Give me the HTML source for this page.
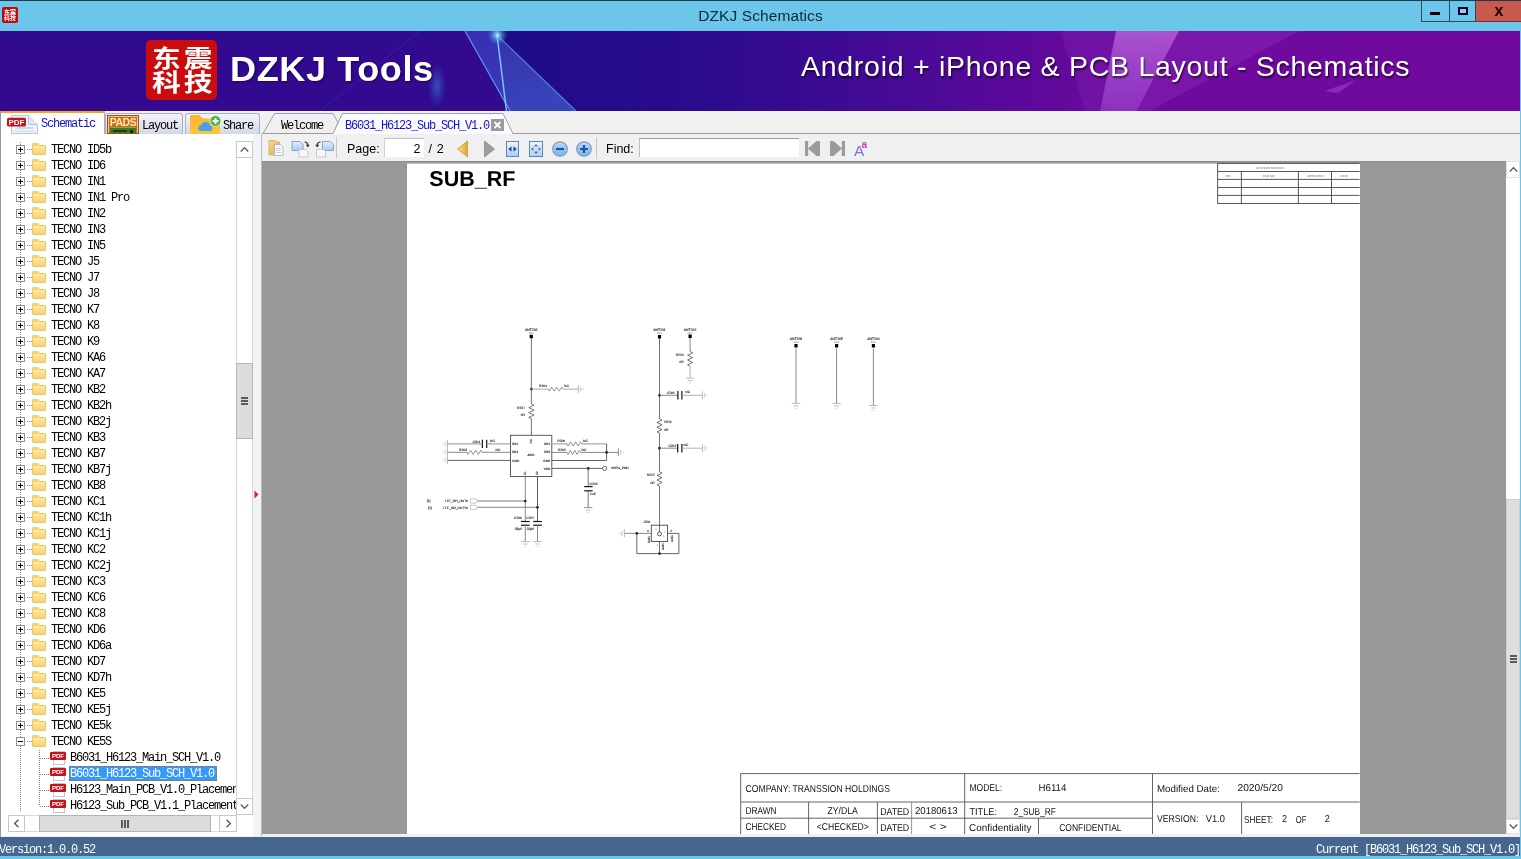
<!DOCTYPE html>
<html lang="en">
<head>
<meta charset="utf-8">
<title>DZKJ Schematics</title>
<style>
*{box-sizing:border-box;margin:0;padding:0}
html,body{width:1521px;height:859px;overflow:hidden;background:#6bc6ea;font-family:"Liberation Sans","Noto Sans CJK SC",sans-serif}
.abs{position:absolute}
#win{will-change:transform;position:absolute;left:0;top:0;width:1521px;height:859px;overflow:hidden;background:#6bc6ea}
/* title bar */
#tbar{position:absolute;left:0;top:0;width:1521px;height:31px;background:#6bc6ea;border-top:1px solid #1f3b4c}
#tbar .ttl{position:absolute;left:0;width:1521px;top:6px;text-align:center;font-size:15.5px;color:#0c2838;letter-spacing:0.1px}
#appico{position:absolute;left:2px;top:6px;width:16px;height:16px;background:#bf0a08;border-radius:2px;color:#fff;font-size:6px;line-height:6px;font-weight:bold;text-align:center;padding-top:2px;font-family:"Liberation Sans","Noto Sans CJK SC",sans-serif;overflow:hidden}
.wbtn{position:absolute;top:0px;height:21px;border:1px solid #2a4a5c;border-top:none}
/* banner */
#banner{position:absolute;left:0;top:31px;width:1520px;height:80px;overflow:hidden;background:linear-gradient(90deg,#310a8f 0px,#310a8f 560px,#2c0b8c 700px,#380a92 800px,#470a96 900px,#58099a 1000px,#68099d 1100px,#6f0a9f 1200px,#700a9f 1520px)}
#logo{position:absolute;left:146px;top:9px;width:71px;height:60px;background:#cb0c0c;border-radius:5px;color:#fff;font-weight:bold;font-family:"Liberation Sans","Noto Sans CJK SC",sans-serif;white-space:nowrap;overflow:hidden}
#logo span{position:absolute;left:6px;top:7px;font-size:24px;line-height:24px;letter-spacing:2.4px;transform:scaleX(1.2);transform-origin:left top;display:block}
#brand{position:absolute;left:230px;top:18px;font-size:35px;font-weight:bold;color:#fff;letter-spacing:.6px;transform:scaleX(1.03);transform-origin:left top;text-shadow:1px 1px 2px rgba(0,0,0,.45);white-space:nowrap}
#slogan{position:absolute;left:801px;top:19px;font-size:28.5px;color:#fff;letter-spacing:0.72px;text-shadow:1px 2px 2px rgba(0,0,0,.65);white-space:nowrap}
/* main background */
#main{position:absolute;left:0;top:111px;width:1520px;height:726px;background:#f0f0f0;border-left:1px solid #8c9baa}
.mono{font-family:"Liberation Mono","Noto Sans CJK SC",monospace;font-size:12px;letter-spacing:-1.2px;white-space:nowrap;color:#000}
/* left tabs */
.ltab{position:absolute;top:113px;height:21px;border:1px solid #a9b0c4;border-bottom:none;border-radius:3px 3px 0 0;background:linear-gradient(#f4f5fa,#d4d7e6)}
.ltab .t{position:absolute;top:3px}
/* tree */
#lpanel{position:absolute;left:1px;top:134px;width:252px;height:702px;background:#fff;overflow:hidden}
#tree{position:absolute;left:0;top:8px;width:235px;height:674px;overflow:hidden}
.row{position:relative;height:16px;white-space:nowrap}
.row .exp{position:absolute;left:15px;top:3px;width:9px;height:9px;border:1px solid #919191;background:#fff}
.row .exp i{position:absolute;left:1px;top:3px;width:5px;height:1px;background:#000}
.row .exp i.pl:after{content:"";position:absolute;left:2px;top:-2px;width:1px;height:5px;background:#000}
.row .fold{position:absolute;left:31px;top:3px;width:14px;height:10px;border-radius:1px;background:linear-gradient(#fbeaa0,#f3d36b);border:1px solid #e8c866}
.row .fold:before{content:"";position:absolute;left:-1px;top:-3px;width:7px;height:3px;background:#f1d272;border-radius:1px 1px 0 0}
.row .lbl{position:absolute;left:50px;top:1px;height:14px;line-height:14px;font-family:"Liberation Mono","Noto Sans CJK SC",monospace;font-size:12px;letter-spacing:-1.2px;color:#000}
.row.file .lbl{left:68px;padding:0 1px}
.row.file .lbl.sel{background:#3399ff;color:#fff;outline:1px dotted #c86400;outline-offset:-1px;top:0;height:15px;line-height:16px;padding-right:3px}
.row .pdf{position:absolute;left:52px;top:1px;width:12px;height:14px;background:#fff;border:1px solid #b9c6d6}
.row .pdf b{position:absolute;left:-4px;top:0px;width:16px;height:8px;background:#c4141a;color:#fff;font-size:6px;line-height:8px;font-family:"Liberation Sans",sans-serif;letter-spacing:0;text-align:center;border-radius:1px}
/* dotted guide lines */
.row .exp:after{content:"";position:absolute;left:9px;top:3px;width:6px;height:1px;background-image:linear-gradient(90deg,transparent 50%,#808080 50%);background-size:2px 1px}
.row.file:before{content:"";position:absolute;left:39px;top:8px;width:10px;height:1px;background-image:linear-gradient(90deg,#808080 50%,transparent 50%);background-size:2px 1px}
.vdot{position:absolute;width:1px;background-image:linear-gradient(#808080 50%,transparent 50%);background-size:1px 2px}
.hdot{position:absolute;height:1px;background-image:linear-gradient(90deg,#808080 50%,transparent 50%);background-size:2px 1px}
/* scrollbars */
.sb{position:absolute;background:#fff;border:1px solid #cfcfcf}
.sbtn{position:absolute;background:#fff;border:1px solid #c8c8c8}
.thumb{position:absolute;background:#dcdcdc;border:1px solid #b4b4b4}
/* toolbar */
#toolbar{position:absolute;left:262px;top:134px;width:1258px;height:27px;background:#f0f0f0}
#toolbar .tx{position:absolute;top:8px;font-size:12.5px;color:#000}
/* doc area */
#doc{position:absolute;left:262px;top:161px;width:1244px;height:673px;background:#999;overflow:hidden}
#page{position:absolute;left:145px;top:3px;width:953px;height:670px;background:#fff;box-shadow:0 -1px 0 #c4c4c4}
#doc:before{content:"";position:absolute;left:0;top:0;width:100%;height:1px;background:#8e8e8e}
/* status */
#status{position:absolute;left:0;top:837px;width:1520px;height:19px;background:#45668f}
#status .mono{color:#fff;position:absolute;top:6px}
</style>
</head>
<body>
<div id="win">
<div id="tbar">
  <div id="appico">东震<br>科技</div>
  <div class="ttl">DZKJ Schematics</div>
  <div class="wbtn" style="left:1421px;width:29px"><div class="abs" style="left:8px;top:11px;width:10px;height:3px;background:#000"></div></div>
  <div class="wbtn" style="left:1449px;width:27px"><div class="abs" style="left:8px;top:6px;width:10px;height:8px;border:2px solid #00002a;background:#8fd0ea"></div></div>
  <div class="wbtn" style="left:1475px;width:46px;background:#c8594e;border-right:none;border-bottom-color:#7a3028"><div class="abs" style="left:18.500px;top:-0.500px;font-size:16px;font-weight:bold;color:#100;line-height:20px;font-family:'Liberation Sans',sans-serif">x</div></div>
</div>
<div id="banner">
  <svg class="abs" style="left:0;top:0" width="1519" height="80" viewBox="0 0 1519 80">
    <defs>
      <linearGradient id="g1" x1="0" y1="0" x2="0.300" y2="1"><stop offset="0" stop-color="#4a8fe8" stop-opacity=".26"/><stop offset="1" stop-color="#3f7de6" stop-opacity=".5"/></linearGradient>
      <linearGradient id="g2" x1="0" y1="0" x2="0" y2="1"><stop offset="0" stop-color="#e79cff" stop-opacity=".5"/><stop offset="1" stop-color="#b860e8" stop-opacity=".45"/></linearGradient>
      <linearGradient id="g3" x1="0" y1="0" x2="1" y2="0"><stop offset="0" stop-color="#1c0c86" stop-opacity=".95"/><stop offset="1" stop-color="#1c0c86" stop-opacity="0"/></linearGradient>
      <radialGradient id="g4"><stop offset="0" stop-color="#c8ffff" stop-opacity=".95"/><stop offset=".35" stop-color="#6fd8f0" stop-opacity=".6"/><stop offset="1" stop-color="#4aa0e8" stop-opacity="0"/></radialGradient>
      <radialGradient id="g5"><stop offset="0" stop-color="#3a7fe0" stop-opacity=".55"/><stop offset="1" stop-color="#3a7fe0" stop-opacity="0"/></radialGradient>
    </defs>
    <polygon points="500,0 740,0 740,80 576,80 497,4" fill="url(#g3)"/>
    <polygon points="465,0 500,0 497,4 576,80 510,80" fill="url(#g1)"/>
    <polygon points="465,0 497,4 506,80 510,80" fill="#3a2fc0" opacity=".45"/>
    <line x1="465" y1="0" x2="510" y2="80" stroke="#6aa8f0" stroke-width="1.200" opacity=".85"/>
    <line x1="497" y1="4" x2="506.500" y2="80" stroke="#7fd4ff" stroke-width="1.500" opacity=".9"/>
    <line x1="497" y1="4" x2="576" y2="80" stroke="#5a8ff0" stroke-width="1.200" opacity=".8"/>
    <circle cx="497.500" cy="4" r="10" fill="url(#g4)"/>
    <ellipse cx="437" cy="55" rx="9" ry="22" fill="url(#g5)"/>
    <line x1="420" y1="0" x2="320" y2="80" stroke="#4a3fc8" stroke-width="1" opacity=".35"/>
    <polygon points="1116,0 1179,0 1136.500,80 1100,80" fill="url(#g2)"/>
    <polygon points="1179,0 1299,0 1150,80 1136.500,80" fill="#a848d8" opacity=".22"/>
    <polygon points="1060,0 1116,0 1100,80 1085,80" fill="#8a30c0" opacity=".25"/>
    <polygon points="1325,60 1356,49 1338,62" fill="#b868e8" opacity=".35"/>
  </svg>
  <div id="logo"><span>东震<br>科技</span></div>
  <div id="brand">DZKJ Tools</div>
  <div id="slogan">Android + iPhone &amp; PCB Layout - Schematics</div>
</div>
<div id="main"></div>
<!-- left tabs -->
<div class="abs" style="left:1px;top:111px;width:104px;height:24px;background:#fff;border-top:2px solid #f5a623;border-right:1px solid #a9b0c4"></div>
<div class="abs" id="ic-pdf" style="left:6px;top:114px;width:34px;height:20px">
  <svg width="34" height="20" viewBox="0 0 34 20"><path d="M5.500 1.500h17l9 9v9h-26z" fill="#eef3fa" stroke="#b8c7dc" stroke-width="1"/><path d="M22.500 1.500v9h9" fill="#dfe8f4" stroke="#b8c7dc" stroke-width="1"/><rect x="11" y="13" width="16" height="2" fill="#c9d9ec"/><rect x="9" y="16.500" width="19" height="1.500" fill="#d5e2f0"/><rect x="1" y="3.800" width="19" height="8.700" rx="1.500" fill="#c4141a"/><text x="10.500" y="11" font-family="Liberation Sans, sans-serif" font-size="8" font-weight="bold" fill="#fff" text-anchor="middle">PDF</text></svg>
</div>
<div class="abs mono" style="left:41px;top:117px;color:#1414c8">Schematic</div>
<div class="ltab" style="left:105px;width:78px"></div>
<div class="abs" style="left:107px;top:115px;width:32px;height:19px;background:#cc6a16;border:1px solid #9a5210;overflow:hidden">
  <div class="abs" style="left:0;top:0;width:30px;height:17px;border:1px solid #f3c98a;border-bottom:none"></div>
  <div class="abs" style="left:0;top:0px;width:30px;text-align:center;font-size:10.500px;line-height:13px;font-weight:bold;color:#ffe9b4;font-family:'Liberation Sans',sans-serif;letter-spacing:-.5px">PADS</div>
  <div class="abs" style="left:2px;top:11px;width:26px;height:8px;background:#3f7a2c;border-top:1px solid #79b050"></div>
  <div class="abs" style="left:5px;top:14px;width:14px;height:2px;background:#1d3d14"></div><div class="abs" style="left:22px;top:14px;width:3px;height:3px;background:#15280f"></div>
</div>
<div class="abs mono" style="left:142px;top:119px">Layout</div>
<div class="ltab" style="left:185px;width:75px"></div>
<div class="abs" style="left:189px;top:114px;width:34px;height:20px">
  <svg width="34" height="20" viewBox="0 0 34 20"><defs><linearGradient id="fg1" x1="0" y1="0" x2="0" y2="1"><stop offset="0" stop-color="#fbb22c"/><stop offset="1" stop-color="#fcc63a"/></linearGradient></defs><path d="M1 2.500q0-1.500 1.500-1.500h8l3 3.500h16q1.500 0 1.500 1.500v14H1z" fill="url(#fg1)"/><path d="M11.500 17a3 3 0 0 1 .8-5.900 4.600 4.600 0 0 1 8.800.6 2.700 2.700 0 0 1 .4 5.300z" fill="#4a9ff2"/><circle cx="26.500" cy="7" r="5.400" fill="#48b04a" stroke="#e8f4e0" stroke-width=".8"/><path d="M23.500 7h6M26.500 4v6" stroke="#fff" stroke-width="2"/></svg>
</div>
<div class="abs mono" style="left:223px;top:119px">Share</div>
<!-- tree panel -->
<div id="lpanel">
<div class="vdot" style="left:19px;top:8px;height:670px"></div>
<div class="vdot" style="left:38px;top:616px;height:56px"></div>
<div id="tree">
<div class="row"><span class="exp"><i class="pl"></i></span><span class="fold"></span><span class="lbl">TECNO ID5b</span></div>
<div class="row"><span class="exp"><i class="pl"></i></span><span class="fold"></span><span class="lbl">TECNO ID6</span></div>
<div class="row"><span class="exp"><i class="pl"></i></span><span class="fold"></span><span class="lbl">TECNO IN1</span></div>
<div class="row"><span class="exp"><i class="pl"></i></span><span class="fold"></span><span class="lbl">TECNO IN1 Pro</span></div>
<div class="row"><span class="exp"><i class="pl"></i></span><span class="fold"></span><span class="lbl">TECNO IN2</span></div>
<div class="row"><span class="exp"><i class="pl"></i></span><span class="fold"></span><span class="lbl">TECNO IN3</span></div>
<div class="row"><span class="exp"><i class="pl"></i></span><span class="fold"></span><span class="lbl">TECNO IN5</span></div>
<div class="row"><span class="exp"><i class="pl"></i></span><span class="fold"></span><span class="lbl">TECNO J5</span></div>
<div class="row"><span class="exp"><i class="pl"></i></span><span class="fold"></span><span class="lbl">TECNO J7</span></div>
<div class="row"><span class="exp"><i class="pl"></i></span><span class="fold"></span><span class="lbl">TECNO J8</span></div>
<div class="row"><span class="exp"><i class="pl"></i></span><span class="fold"></span><span class="lbl">TECNO K7</span></div>
<div class="row"><span class="exp"><i class="pl"></i></span><span class="fold"></span><span class="lbl">TECNO K8</span></div>
<div class="row"><span class="exp"><i class="pl"></i></span><span class="fold"></span><span class="lbl">TECNO K9</span></div>
<div class="row"><span class="exp"><i class="pl"></i></span><span class="fold"></span><span class="lbl">TECNO KA6</span></div>
<div class="row"><span class="exp"><i class="pl"></i></span><span class="fold"></span><span class="lbl">TECNO KA7</span></div>
<div class="row"><span class="exp"><i class="pl"></i></span><span class="fold"></span><span class="lbl">TECNO KB2</span></div>
<div class="row"><span class="exp"><i class="pl"></i></span><span class="fold"></span><span class="lbl">TECNO KB2h</span></div>
<div class="row"><span class="exp"><i class="pl"></i></span><span class="fold"></span><span class="lbl">TECNO KB2j</span></div>
<div class="row"><span class="exp"><i class="pl"></i></span><span class="fold"></span><span class="lbl">TECNO KB3</span></div>
<div class="row"><span class="exp"><i class="pl"></i></span><span class="fold"></span><span class="lbl">TECNO KB7</span></div>
<div class="row"><span class="exp"><i class="pl"></i></span><span class="fold"></span><span class="lbl">TECNO KB7j</span></div>
<div class="row"><span class="exp"><i class="pl"></i></span><span class="fold"></span><span class="lbl">TECNO KB8</span></div>
<div class="row"><span class="exp"><i class="pl"></i></span><span class="fold"></span><span class="lbl">TECNO KC1</span></div>
<div class="row"><span class="exp"><i class="pl"></i></span><span class="fold"></span><span class="lbl">TECNO KC1h</span></div>
<div class="row"><span class="exp"><i class="pl"></i></span><span class="fold"></span><span class="lbl">TECNO KC1j</span></div>
<div class="row"><span class="exp"><i class="pl"></i></span><span class="fold"></span><span class="lbl">TECNO KC2</span></div>
<div class="row"><span class="exp"><i class="pl"></i></span><span class="fold"></span><span class="lbl">TECNO KC2j</span></div>
<div class="row"><span class="exp"><i class="pl"></i></span><span class="fold"></span><span class="lbl">TECNO KC3</span></div>
<div class="row"><span class="exp"><i class="pl"></i></span><span class="fold"></span><span class="lbl">TECNO KC6</span></div>
<div class="row"><span class="exp"><i class="pl"></i></span><span class="fold"></span><span class="lbl">TECNO KC8</span></div>
<div class="row"><span class="exp"><i class="pl"></i></span><span class="fold"></span><span class="lbl">TECNO KD6</span></div>
<div class="row"><span class="exp"><i class="pl"></i></span><span class="fold"></span><span class="lbl">TECNO KD6a</span></div>
<div class="row"><span class="exp"><i class="pl"></i></span><span class="fold"></span><span class="lbl">TECNO KD7</span></div>
<div class="row"><span class="exp"><i class="pl"></i></span><span class="fold"></span><span class="lbl">TECNO KD7h</span></div>
<div class="row"><span class="exp"><i class="pl"></i></span><span class="fold"></span><span class="lbl">TECNO KE5</span></div>
<div class="row"><span class="exp"><i class="pl"></i></span><span class="fold"></span><span class="lbl">TECNO KE5j</span></div>
<div class="row"><span class="exp"><i class="pl"></i></span><span class="fold"></span><span class="lbl">TECNO KE5k</span></div>
<div class="row open"><span class="exp"><i class="mn"></i></span><span class="fold"></span><span class="lbl">TECNO KE5S</span></div>
<div class="row file"><span class="pdf"><b>PDF</b></span><span class="lbl">B6031_H6123_Main_SCH_V1.0</span></div>
<div class="row file"><span class="pdf"><b>PDF</b></span><span class="lbl sel">B6031_H6123_Sub_SCH_V1.0</span></div>
<div class="row file"><span class="pdf"><b>PDF</b></span><span class="lbl">H6123_Main_PCB_V1.0_Placement</span></div>
<div class="row file"><span class="pdf"><b>PDF</b></span><span class="lbl">H6123_Sub_PCB_V1.1_Placement</span></div>
<div class="row"><span class="exp"><i class="pl"></i></span><span class="fold"></span><span class="lbl">TECNO KE6</span></div></div>
<!-- vertical scrollbar -->
<div class="sb" style="left:235px;top:7px;width:17px;height:674px;border-color:#d9d9d9"></div>
<div class="sbtn" style="left:235px;top:7px;width:17px;height:17px"><svg class="abs" style="left:3px;top:4px" width="9" height="7" viewBox="0 0 9 7"><path d="M.8 5.500L4.500 1.600 8.200 5.500" fill="none" stroke="#555" stroke-width="1.300"/></svg></div>
<div class="sbtn" style="left:235px;top:664px;width:17px;height:17px"><svg class="abs" style="left:3px;top:4px" width="9" height="7" viewBox="0 0 9 7"><path d="M.8 1.500L4.500 5.400 8.200 1.500" fill="none" stroke="#555" stroke-width="1.300"/></svg></div>
<div class="thumb" style="left:235px;top:229px;width:17px;height:76px"><div class="abs" style="left:4px;top:33px;width:7px;height:2px;background:#5a5a5a;box-shadow:0 3px 0 #5a5a5a,0 6px 0 #5a5a5a"></div></div>
<!-- horizontal scrollbar -->
<div class="sb" style="left:7px;top:681px;width:229px;height:17px;border-color:#d9d9d9"></div>
<div class="sbtn" style="left:7px;top:681px;width:17px;height:17px"><svg class="abs" style="left:4px;top:3px" width="7" height="9" viewBox="0 0 7 9"><path d="M5.500.8L1.600 4.500 5.500 8.200" fill="none" stroke="#555" stroke-width="1.300"/></svg></div>
<div class="sbtn" style="left:218px;top:681px;width:18px;height:17px"><svg class="abs" style="left:5px;top:3px" width="7" height="9" viewBox="0 0 7 9"><path d="M1.500.8L5.400 4.500 1.500 8.200" fill="none" stroke="#555" stroke-width="1.300"/></svg></div>
<div class="thumb" style="left:38px;top:681px;width:172px;height:17px"><div class="abs" style="left:81px;top:4px;width:2px;height:8px;background:#5a5a5a;box-shadow:3px 0 0 #5a5a5a,6px 0 0 #5a5a5a"></div></div>
</div>
<!-- splitter -->
<div class="abs" style="left:253px;top:134px;width:9px;height:702px;background:#f1f3f7;border-right:1px solid #b4bac4"></div>
<svg class="abs" style="left:254px;top:490px" width="5" height="9" viewBox="0 0 5 9"><path d="M.5.500L4.500 4.500.5 8.500z" fill="#e02020"/></svg>
<!-- doc tabs -->
<div class="abs" style="left:262px;top:133px;width:1258px;height:1px;background:#9a9a9a"></div>
<svg class="abs" style="left:262px;top:112px" width="260" height="23" viewBox="0 0 260 23">
  <path d="M.5 22.500L12.500 1.500H71L76 10.500L71 22.500" fill="#f0f0f0" stroke="#9aa0ac" stroke-width="1"/>
  <path d="M70.500 22.500L80.500 1.500H241L251.500 22.500" fill="#fafafa" stroke="#9aa0ac" stroke-width="1"/>
  <path d="M0 21.500H70.500" stroke="#9a9a9a" stroke-width="1"/>
  <rect x="229" y="7" width="13" height="12" fill="#9a9a9a"/>
  <path d="M232.500 10l6 6M238.500 10l-6 6" stroke="#fff" stroke-width="1.800"/>
</svg>
<div class="abs mono" style="left:281px;top:119px">Welcome</div>
<div class="abs mono" style="left:345px;top:119px;color:#1414c8">B6031_H6123_Sub_SCH_V1.0</div>
<div id="toolbar">
  <!-- icons -->
  <svg class="abs" style="left:5px;top:3px" width="75" height="23" viewBox="0 0 75 23">
    <defs>
      <linearGradient id="tg1" x1="0" y1="0" x2="1" y2="1"><stop offset="0" stop-color="#f6dc98"/><stop offset="1" stop-color="#dca84a"/></linearGradient>
      <linearGradient id="tg2" x1="0" y1="0" x2="0" y2="1"><stop offset="0" stop-color="#e4eefb"/><stop offset="1" stop-color="#a9c8ec"/></linearGradient>
    </defs>
    <path d="M2 3.500h6l1.500 1.500h3v13h-10.500z" fill="url(#tg1)" stroke="#d2a850" stroke-width=".8"/>
    <path d="M7.500 7.500h6l2.500 2.500v8.500h-8.500z" fill="#fbfcfe" stroke="#a9b4c4" stroke-width=".9"/>
    <path d="M9 11.500h5M9 13.500h5M9 15.500h5" stroke="#b4c0d0" stroke-width=".8"/>
    <path d="M25 4.500h8l3 3v6h-11z" fill="url(#tg2)" stroke="#7d9cc4" stroke-width=".9"/>
    <path d="M32 12.500h7l2 2v5.500h-9z" fill="#f8f8f8" stroke="#c4c4c4" stroke-width=".9"/>
    <path d="M37.500 5q3.300 0 3.300 3.300" fill="none" stroke="#333" stroke-width="1.200"/><path d="M38.800 7.800h4l-2 2.600z" fill="#333"/>
    <path d="M55.500 4.500h8l3 3v6h-11z" fill="url(#tg2)" stroke="#7d9cc4" stroke-width=".9"/>
    <path d="M49.500 12.500h7l2 2v5.500h-9z" fill="#f8f8f8" stroke="#c4c4c4" stroke-width=".9"/>
    <path d="M53.500 5q-3.300 0 -3.300 3.300" fill="none" stroke="#333" stroke-width="1.200"/><path d="M48.200 7.800h4l-2 2.600z" fill="#333"/>
    <path d="M69.500 0v21.500" stroke="#c6c6c6"/>
  </svg>
  <div class="tx" style="left:85px">Page:</div>
  <div class="abs" style="left:122px;top:4px;width:40px;height:19px;background:#fff;border-top:1px solid #c0c0c0;border-left:1px solid #d0d0d0"></div>
  <div class="tx" style="left:151.500px">2</div>
  <div class="tx" style="left:166.500px;letter-spacing:.6px">/ 2</div>
  <svg class="abs" style="left:190px;top:2.500px" width="150" height="24" viewBox="0 0 150 24">
    <defs>
      <linearGradient id="tg3" x1="0" y1="0" x2="1" y2="0"><stop offset="0" stop-color="#f9e08a"/><stop offset="1" stop-color="#dba63a"/></linearGradient>
      <linearGradient id="tg4" x1="0" y1="0" x2="0" y2="1"><stop offset="0" stop-color="#eef4fd"/><stop offset="1" stop-color="#aecdee"/></linearGradient>
      <linearGradient id="tg5" x1="0" y1="0" x2="0" y2="1"><stop offset="0" stop-color="#b9dafa"/><stop offset="1" stop-color="#76b2ee"/></linearGradient>
    </defs>
    <path d="M15.500 4L5.500 12 15.500 20z" fill="url(#tg3)" stroke="#cf9f3e" stroke-width=".9"/>
    <path d="M32.500 4L42.500 12 32.500 20z" fill="#9c9c9c" stroke="#929292" stroke-width=".9"/>
    <rect x="54.500" y="4.500" width="12" height="15" fill="url(#tg4)" stroke="#5f86bc"/>
    <path d="M56.300 12l3.200-2.800v5.600zM64.700 12l-3.200-2.800v5.600z" fill="#1d4c8c"/>
    <rect x="77.500" y="4.500" width="13" height="15" fill="url(#tg4)" stroke="#5f86bc"/>
    <path d="M84 7.300l-1.800 1.900h3.600zM84 16.700l-1.800-1.900h3.600zM79.300 12l1.900-1.800v3.600zM88.700 12l-1.900-1.800v3.600z" fill="#2a5a9c"/>
    <circle cx="84" cy="12" r="2.600" fill="none" stroke="#7fa3cf" stroke-width=".7" stroke-dasharray="1.300 1"/>
    <circle cx="108" cy="12" r="7.300" fill="url(#tg5)" stroke="#7f94b4" stroke-width="1.100"/><path d="M104 12h8" stroke="#1c55a8" stroke-width="2.200"/>
    <circle cx="132" cy="12" r="7.300" fill="url(#tg5)" stroke="#7f94b4" stroke-width="1.100"/><path d="M128 12h8M132 8v8" stroke="#1c55a8" stroke-width="2.200"/>
    <path d="M144.500 .5v21.500" stroke="#c6c6c6"/>
  </svg>
  <div class="tx" style="left:344px">Find:</div>
  <div class="abs" style="left:377px;top:4px;width:160px;height:19px;background:#fff;border-top:1px solid #9a9a9a;border-left:1px solid #c0c0c0"></div>
  <svg class="abs" style="left:540px;top:2px" width="70" height="24" viewBox="0 0 70 24">
    <path d="M3 5h3.200v15H3zM6 12.500L14.500 5H18v15h-3.500z" fill="#9b9b9b"/>
    <path d="M43 5h-3.200v15H43zM40 12.500L31.500 5H28v15h3.500z" fill="#9b9b9b"/>
    <text x="52" y="20" font-family="Liberation Sans, sans-serif" font-size="15.500" fill="#7b6fdc">A</text><text x="59.500" y="11.500" font-family="Liberation Sans, sans-serif" font-size="10" font-weight="bold" fill="#cc3ab8">a</text>
  </svg>
</div>
<div id="doc">
<div id="page"></div>
<svg class="abs" style="left:145px;top:0" width="953" height="673" viewBox="407 161 953 673" font-family="Liberation Sans, sans-serif" text-rendering="geometricPrecision">
<text x="429.3" y="185.8" font-size="21.5" font-weight="bold" fill="#000">SUB_RF</text>
<path d="M1217.6 163.4L1359.6 163.4" stroke="#444" stroke-width="0.9" fill="none"/>
<path d="M1217.6 171.5L1359.6 171.5" stroke="#444" stroke-width="0.9" fill="none"/>
<path d="M1217.6 179.4L1359.6 179.4" stroke="#444" stroke-width="0.9" fill="none"/>
<path d="M1217.6 187.5L1359.6 187.5" stroke="#444" stroke-width="0.9" fill="none"/>
<path d="M1217.6 195.4L1359.6 195.4" stroke="#444" stroke-width="0.9" fill="none"/>
<path d="M1217.6 203.5L1359.6 203.5" stroke="#444" stroke-width="0.9" fill="none"/>
<path d="M1217.6 163.4L1217.6 203.5" stroke="#444" stroke-width="0.9" fill="none"/>
<path d="M1241.4 171.5L1241.4 203.5" stroke="#444" stroke-width="0.9" fill="none"/>
<path d="M1298.4 171.5L1298.4 203.5" stroke="#444" stroke-width="0.9" fill="none"/>
<path d="M1331.5 171.5L1331.5 203.5" stroke="#444" stroke-width="0.9" fill="none"/>
<text x="1270" y="168.8" font-size="2.9" text-anchor="middle" fill="#666">REVISION RECORD</text>
<text x="1227.7" y="176.8" font-size="2.9" text-anchor="middle" fill="#666">LTR</text>
<text x="1269" y="176.8" font-size="2.9" text-anchor="middle" fill="#666">ECO NO:</text>
<text x="1316" y="176.8" font-size="2.9" text-anchor="middle" fill="#666">APPROVED:</text>
<text x="1344.7" y="176.8" font-size="2.9" text-anchor="middle" fill="#666">DATE:</text>
<text x="531.3" y="330.8" font-size="3.4" text-anchor="middle" fill="#1a1a1a" stroke="#1a1a1a" stroke-width="0.12">ANT203</text>
<text x="531.3" y="333.7" font-size="2.6" text-anchor="middle" fill="#666">RC0</text>
<rect x="529.7" y="334.7" width="3.2" height="3.6" rx="0.5" fill="#000"/>
<path d="M531.4 338L531.4 404" stroke="#505050" stroke-width="0.8" fill="none"/>
<circle cx="531.4" cy="389.1" r="1.35" fill="#222"/>
<path d="M531.4 389.1L548 389.1" stroke="#a8a8a8" stroke-width="1.0" fill="none"/>
<path d="M548 389.1L549.25 391.1L551.75 387.1L554.25 391.1L556.75 387.1L559.25 391.1L561.75 387.1L563 389.1" stroke="#7a7a7a" stroke-width="0.8" fill="none" stroke-linejoin="miter"/>
<path d="M563 389.1L578.3 389.1" stroke="#a8a8a8" stroke-width="1.0" fill="none"/>
<path d="M578.3 385.1L578.3 393.1" stroke="#a8a8a8" stroke-width="0.8" fill="none"/>
<path d="M580.8 386.8L580.8 391.4" stroke="#a8a8a8" stroke-width="0.8" fill="none"/>
<path d="M583.3 388.3L583.3 389.9" stroke="#c8c8c8" stroke-width="0.8" fill="none"/>
<text x="539" y="386.9" font-size="3.3" text-anchor="start" fill="#1a1a1a" stroke="#1a1a1a" stroke-width="0.12">R204</text>
<text x="564" y="386.9" font-size="3.3" text-anchor="start" fill="#1a1a1a" stroke="#1a1a1a" stroke-width="0.12">NC</text>
<path d="M531.4 404L534 405.23L528.8 407.68L534 410.12L528.8 412.57L534 415.02L528.8 417.47L531.4 418.7" stroke="#505050" stroke-width="0.8" fill="none" stroke-linejoin="miter"/>
<path d="M531.4 418.7L531.4 435.3" stroke="#505050" stroke-width="0.8" fill="none"/>
<text x="525" y="408.9" font-size="3.3" text-anchor="end" fill="#1a1a1a" stroke="#1a1a1a" stroke-width="0.12">R207</text>
<text x="525" y="415.6" font-size="3.3" text-anchor="end" fill="#1a1a1a" stroke="#1a1a1a" stroke-width="0.12">0R</text>
<rect x="510.5" y="435.3" width="41.3" height="41.2" fill="none" stroke="#4a4a4a" stroke-width="0.9"/>
<text x="512.3" y="445" font-size="3.1" text-anchor="start" fill="#1a1a1a" stroke="#1a1a1a" stroke-width="0.12">RF1</text>
<text x="512.3" y="453.4" font-size="3.1" text-anchor="start" fill="#1a1a1a" stroke="#1a1a1a" stroke-width="0.12">RF4</text>
<text x="512.3" y="461.5" font-size="3.1" text-anchor="start" fill="#1a1a1a" stroke="#1a1a1a" stroke-width="0.12">GND</text>
<text x="550.2" y="445" font-size="3.1" text-anchor="end" fill="#1a1a1a" stroke="#1a1a1a" stroke-width="0.12">RF1</text>
<text x="550.2" y="453.4" font-size="3.1" text-anchor="end" fill="#1a1a1a" stroke="#1a1a1a" stroke-width="0.12">RF3</text>
<text x="550.2" y="461.5" font-size="3.1" text-anchor="end" fill="#1a1a1a" stroke="#1a1a1a" stroke-width="0.12">GND</text>
<text x="550.2" y="469.5" font-size="3.1" text-anchor="end" fill="#1a1a1a" stroke="#1a1a1a" stroke-width="0.12">VDD</text>
<text x="531" y="456.3" font-size="3.1" text-anchor="middle" fill="#1a1a1a" stroke="#1a1a1a" stroke-width="0.12">A201</text>
<text x="532.4" y="443.4" font-size="3.1" text-anchor="start" fill="#1a1a1a" transform="rotate(-90 532.4 443.4)" stroke="#1a1a1a" stroke-width="0.12">NC</text>
<text x="526.3" y="475.3" font-size="3.1" text-anchor="start" fill="#1a1a1a" transform="rotate(-90 526.3 475.3)" stroke="#1a1a1a" stroke-width="0.12">C1</text>
<text x="538.4" y="475.3" font-size="3.1" text-anchor="start" fill="#1a1a1a" transform="rotate(-90 538.4 475.3)" stroke="#1a1a1a" stroke-width="0.12">C2</text>
<path d="M447.4 443.9L510.5 443.9" stroke="#a8a8a8" stroke-width="1.3" fill="none"/>
<path d="M447.4 452.3L510.5 452.3" stroke="#7a7a7a" stroke-width="0.9" fill="none"/>
<path d="M447.4 460.4L510.5 460.4" stroke="#505050" stroke-width="0.9" fill="none"/>
<path d="M447.4 440.2L447.4 463.9" stroke="#a8a8a8" stroke-width="0.9" fill="none"/>
<path d="M445 441.7L445 446.1" stroke="#c4c4c4" stroke-width="0.8" fill="none"/>
<path d="M442.6 443.1L442.6 444.7" stroke="#d4d4d4" stroke-width="0.8" fill="none"/>
<path d="M445 450.1L445 454.5" stroke="#c4c4c4" stroke-width="0.8" fill="none"/>
<path d="M442.6 451.5L442.6 453.1" stroke="#d4d4d4" stroke-width="0.8" fill="none"/>
<path d="M445 458.2L445 462.6" stroke="#c4c4c4" stroke-width="0.8" fill="none"/>
<path d="M442.6 459.6L442.6 461.2" stroke="#d4d4d4" stroke-width="0.8" fill="none"/>
<rect x="479" y="441" width="11" height="6" fill="#fff"/>
<path d="M482.4 439.7L482.4 448.1" stroke="#111" stroke-width="1.2" fill="none"/>
<path d="M486.7 439.7L486.7 448.1" stroke="#111" stroke-width="1.2" fill="none"/>
<path d="M479 443.9L482.4 443.9" stroke="#a8a8a8" stroke-width="1.3" fill="none"/>
<path d="M486.7 443.9L491 443.9" stroke="#a8a8a8" stroke-width="1.3" fill="none"/>
<text x="480.3" y="442.9" font-size="3.3" text-anchor="end" fill="#1a1a1a" stroke="#1a1a1a" stroke-width="0.12">C204</text>
<text x="490" y="442.3" font-size="3.3" text-anchor="start" fill="#1a1a1a" stroke="#1a1a1a" stroke-width="0.12">NC</text>
<rect x="467" y="450" width="15" height="5" fill="#fff"/>
<path d="M466.8 452.3L468.07 454.4L470.62 450.2L473.18 454.4L475.73 450.2L478.28 454.4L480.83 450.2L482.1 452.3" stroke="#7a7a7a" stroke-width="0.8" fill="none" stroke-linejoin="miter"/>
<text x="467" y="450.8" font-size="3.3" text-anchor="end" fill="#1a1a1a" stroke="#1a1a1a" stroke-width="0.12">R203</text>
<text x="495.5" y="450.8" font-size="3.3" text-anchor="start" fill="#1a1a1a" stroke="#1a1a1a" stroke-width="0.12">NC</text>
<path d="M551.8 443.9L606.6 443.9" stroke="#a8a8a8" stroke-width="1.1" fill="none"/>
<path d="M551.8 452.4L618.4 452.4" stroke="#7a7a7a" stroke-width="0.9" fill="none"/>
<path d="M551.8 460.5L606.6 460.5" stroke="#505050" stroke-width="0.9" fill="none"/>
<path d="M606.6 443.9L606.6 460.5" stroke="#505050" stroke-width="0.9" fill="none"/>
<circle cx="606.6" cy="452.4" r="1.35" fill="#222"/>
<path d="M618.4 448.4L618.4 456.4" stroke="#7a7a7a" stroke-width="0.8" fill="none"/>
<path d="M620.9 450.1L620.9 454.7" stroke="#a8a8a8" stroke-width="0.8" fill="none"/>
<path d="M623.4 451.6L623.4 453.2" stroke="#c8c8c8" stroke-width="0.8" fill="none"/>
<rect x="567" y="441.500" width="15" height="5" fill="#fff"/>
<path d="M566.8 443.9L568.07 446L570.6 441.8L573.13 446L575.67 441.8L578.2 446L580.73 441.8L582 443.9" stroke="#7a7a7a" stroke-width="0.8" fill="none" stroke-linejoin="miter"/>
<text x="557.3" y="442.4" font-size="3.3" text-anchor="start" fill="#1a1a1a" stroke="#1a1a1a" stroke-width="0.12">R206</text>
<text x="583" y="442.2" font-size="3.3" text-anchor="start" fill="#1a1a1a" stroke="#1a1a1a" stroke-width="0.12">NC</text>
<rect x="567" y="450" width="13.500" height="5" fill="#fff"/>
<path d="M566.8 452.4L567.94 454.5L570.22 450.3L572.51 454.5L574.79 450.3L577.08 454.5L579.36 450.3L580.5 452.4" stroke="#7a7a7a" stroke-width="0.8" fill="none" stroke-linejoin="miter"/>
<text x="558" y="450.8" font-size="3.3" text-anchor="start" fill="#1a1a1a" stroke="#1a1a1a" stroke-width="0.12">R205</text>
<text x="581.5" y="450.8" font-size="3.3" text-anchor="start" fill="#1a1a1a" stroke="#1a1a1a" stroke-width="0.12">NC</text>
<path d="M551.8 468.4L602.4 468.4" stroke="#505050" stroke-width="0.9" fill="none"/>
<circle cx="604.600" cy="468.400" r="2.100" fill="#fff" stroke="#444" stroke-width="0.8"/>
<circle cx="588.2" cy="468.4" r="1.35" fill="#222"/>
<text x="611" y="469.4" font-size="3.2" text-anchor="start" fill="#1a1a1a" stroke="#1a1a1a" stroke-width="0.12">VREG_PMU</text>
<path d="M588.2 468.4L588.2 486.6" stroke="#505050" stroke-width="0.8" fill="none"/>
<path d="M584.2 486.6L592.6 486.6" stroke="#111" stroke-width="1.2" fill="none"/>
<path d="M584.2 490.8L592.6 490.8" stroke="#111" stroke-width="1.2" fill="none"/>
<path d="M588.2 490.8L588.2 507.6" stroke="#505050" stroke-width="0.8" fill="none"/>
<path d="M584 507.6L592.4 507.6" stroke="#7a7a7a" stroke-width="0.8" fill="none"/>
<path d="M585.8 510.1L590.6 510.1" stroke="#a8a8a8" stroke-width="0.8" fill="none"/>
<path d="M587.3 512.6L589.1 512.6" stroke="#c8c8c8" stroke-width="0.8" fill="none"/>
<text x="589.6" y="484.5" font-size="3.3" text-anchor="start" fill="#1a1a1a" stroke="#1a1a1a" stroke-width="0.12">C205</text>
<text x="590" y="494.5" font-size="3.3" text-anchor="start" fill="#1a1a1a" stroke="#1a1a1a" stroke-width="0.12">1uF</text>
<path d="M525.3 476.5L525.3 521.5" stroke="#7a7a7a" stroke-width="0.9" fill="none"/>
<path d="M537.5 476.5L537.5 521.5" stroke="#505050" stroke-width="0.9" fill="none"/>
<path d="M477.3 501L525.3 501" stroke="#a8a8a8" stroke-width="1.3" fill="none"/>
<path d="M477.3 507.3L537.5 507.3" stroke="#7a7a7a" stroke-width="0.9" fill="none"/>
<circle cx="525.3" cy="501" r="1.35" fill="#222"/>
<circle cx="537.5" cy="507.3" r="1.35" fill="#222"/>
<path d="M470.300 498.9H475.200A2.100 2.100 0 0 1 475.200 503.1H470.300Z" fill="#fff" stroke="#aaa" stroke-width="0.7"/>
<path d="M470.300 505.2H475.200A2.100 2.100 0 0 1 475.200 509.4H470.300Z" fill="#fff" stroke="#aaa" stroke-width="0.7"/>
<text x="467.9" y="502.3" font-size="3.2" text-anchor="end" fill="#1a1a1a" stroke="#1a1a1a" stroke-width="0.12">LTE_SPI_OUT9</text>
<text x="467.9" y="508.6" font-size="3.2" text-anchor="end" fill="#1a1a1a" stroke="#1a1a1a" stroke-width="0.12">LTE_SPI_OUT10</text>
<text x="426.8" y="502.2" font-size="3.4" text-anchor="start" fill="#1a1a1a" stroke="#1a1a1a" stroke-width="0.12">[1]</text>
<text x="428" y="508.6" font-size="3.4" text-anchor="start" fill="#1a1a1a" stroke="#1a1a1a" stroke-width="0.12">[1]</text>
<path d="M521 521.5L529.6 521.5" stroke="#111" stroke-width="1.2" fill="none"/>
<path d="M521 525.2L529.6 525.2" stroke="#111" stroke-width="1.2" fill="none"/>
<path d="M525.3 525.2L525.3 541.5" stroke="#7a7a7a" stroke-width="0.9" fill="none"/>
<path d="M521.1 541.5L529.5 541.5" stroke="#a8a8a8" stroke-width="0.8" fill="none"/>
<path d="M522.9 544L527.7 544" stroke="#a8a8a8" stroke-width="0.8" fill="none"/>
<path d="M524.4 546.5L526.2 546.5" stroke="#c8c8c8" stroke-width="0.8" fill="none"/>
<path d="M533.2 521.5L541.8 521.5" stroke="#111" stroke-width="1.2" fill="none"/>
<path d="M533.2 525.2L541.8 525.2" stroke="#111" stroke-width="1.2" fill="none"/>
<path d="M537.5 525.2L537.5 541.5" stroke="#7a7a7a" stroke-width="0.9" fill="none"/>
<path d="M533.3 541.5L541.7 541.5" stroke="#a8a8a8" stroke-width="0.8" fill="none"/>
<path d="M535.1 544L539.9 544" stroke="#a8a8a8" stroke-width="0.8" fill="none"/>
<path d="M536.6 546.5L538.4 546.5" stroke="#c8c8c8" stroke-width="0.8" fill="none"/>
<text x="514" y="518.6" font-size="3.3" text-anchor="start" fill="#1a1a1a" stroke="#1a1a1a" stroke-width="0.12">C206</text>
<text x="526.3" y="518.6" font-size="3.3" text-anchor="start" fill="#1a1a1a" stroke="#1a1a1a" stroke-width="0.12">C207</text>
<text x="514.7" y="529.8" font-size="3.3" text-anchor="start" fill="#1a1a1a" stroke="#1a1a1a" stroke-width="0.12">33pF</text>
<text x="526.8" y="529.8" font-size="3.3" text-anchor="start" fill="#1a1a1a" stroke="#1a1a1a" stroke-width="0.12">33pF</text>
<text x="659.5" y="331.1" font-size="3.4" text-anchor="middle" fill="#1a1a1a" stroke="#1a1a1a" stroke-width="0.12">ANT201</text>
<text x="659.5" y="334" font-size="2.6" text-anchor="middle" fill="#666">RC0</text>
<rect x="657.9" y="335" width="3.2" height="3.6" rx="0.5" fill="#000"/>
<text x="690.1" y="330.6" font-size="3.4" text-anchor="middle" fill="#1a1a1a" stroke="#1a1a1a" stroke-width="0.12">ANT202</text>
<text x="690.1" y="333.5" font-size="2.6" text-anchor="middle" fill="#666">RC0</text>
<rect x="688.5" y="334.5" width="3.2" height="3.6" rx="0.5" fill="#000"/>
<path d="M659.5 338L659.5 418.9" stroke="#505050" stroke-width="0.8" fill="none"/>
<path d="M690.1 338L690.1 351.6" stroke="#7a7a7a" stroke-width="0.9" fill="none"/>
<path d="M690.1 351.6L692.6 352.8L687.6 355.2L692.6 357.6L687.6 360L692.6 362.4L687.6 364.8L690.1 366" stroke="#505050" stroke-width="0.8" fill="none" stroke-linejoin="miter"/>
<path d="M690.1 366L690.1 378.1" stroke="#a8a8a8" stroke-width="0.9" fill="none"/>
<path d="M685.9 378.1L694.3 378.1" stroke="#a8a8a8" stroke-width="0.8" fill="none"/>
<path d="M687.7 380.6L692.5 380.6" stroke="#a8a8a8" stroke-width="0.8" fill="none"/>
<path d="M689.2 383.1L691 383.1" stroke="#c8c8c8" stroke-width="0.8" fill="none"/>
<text x="683.6" y="356.1" font-size="3.3" text-anchor="end" fill="#1a1a1a" stroke="#1a1a1a" stroke-width="0.12">R210</text>
<text x="683.6" y="362.7" font-size="3.3" text-anchor="end" fill="#1a1a1a" stroke="#1a1a1a" stroke-width="0.12">0R</text>
<circle cx="659.5" cy="395.3" r="1.35" fill="#222"/>
<path d="M659.5 395.3L677.9 395.3" stroke="#7a7a7a" stroke-width="0.9" fill="none"/>
<path d="M677.9 391L677.9 399.5" stroke="#111" stroke-width="1.2" fill="none"/>
<path d="M681.9 391L681.9 399.5" stroke="#111" stroke-width="1.2" fill="none"/>
<path d="M681.9 395.3L702.4 395.3" stroke="#a8a8a8" stroke-width="0.9" fill="none"/>
<path d="M702.4 391.3L702.4 399.3" stroke="#a8a8a8" stroke-width="0.8" fill="none"/>
<path d="M704.9 393L704.9 397.6" stroke="#a8a8a8" stroke-width="0.8" fill="none"/>
<path d="M707.4 394.5L707.4 396.1" stroke="#c8c8c8" stroke-width="0.8" fill="none"/>
<text x="667" y="393.7" font-size="3.3" text-anchor="start" fill="#1a1a1a" stroke="#1a1a1a" stroke-width="0.12">C201</text>
<text x="685.3" y="393.1" font-size="3.3" text-anchor="start" fill="#1a1a1a" stroke="#1a1a1a" stroke-width="0.12">NC</text>
<path d="M659.5 418.9L662 420.08L657 422.45L662 424.82L657 427.18L662 429.55L657 431.92L659.5 433.1" stroke="#505050" stroke-width="0.8" fill="none" stroke-linejoin="miter"/>
<path d="M659.5 433.1L659.5 471.8" stroke="#505050" stroke-width="0.8" fill="none"/>
<text x="664.2" y="423.4" font-size="3.3" text-anchor="start" fill="#1a1a1a" stroke="#1a1a1a" stroke-width="0.12">R211</text>
<text x="664.2" y="430.8" font-size="3.3" text-anchor="start" fill="#1a1a1a" stroke="#1a1a1a" stroke-width="0.12">0R</text>
<circle cx="659.5" cy="448.2" r="1.35" fill="#222"/>
<path d="M659.5 448.2L677.6 448.2" stroke="#7a7a7a" stroke-width="0.9" fill="none"/>
<path d="M677.7 444L677.7 452.4" stroke="#111" stroke-width="1.2" fill="none"/>
<path d="M681.9 444L681.9 452.4" stroke="#111" stroke-width="1.2" fill="none"/>
<path d="M681.9 448.2L702.6 448.2" stroke="#a8a8a8" stroke-width="0.9" fill="none"/>
<path d="M702.6 444.2L702.6 452.2" stroke="#a8a8a8" stroke-width="0.8" fill="none"/>
<path d="M705.1 445.9L705.1 450.5" stroke="#a8a8a8" stroke-width="0.8" fill="none"/>
<path d="M707.6 447.4L707.6 449" stroke="#c8c8c8" stroke-width="0.8" fill="none"/>
<text x="668.4" y="447.1" font-size="3.3" text-anchor="start" fill="#1a1a1a" stroke="#1a1a1a" stroke-width="0.12">C202</text>
<text x="683.5" y="446.1" font-size="3.3" text-anchor="start" fill="#1a1a1a" stroke="#1a1a1a" stroke-width="0.12">NC</text>
<path d="M659.5 471.8L662 472.98L657 475.35L662 477.72L657 480.08L662 482.45L657 484.82L659.5 486" stroke="#505050" stroke-width="0.8" fill="none" stroke-linejoin="miter"/>
<path d="M659.5 486L659.5 531.8" stroke="#505050" stroke-width="0.8" fill="none"/>
<text x="654.7" y="475.9" font-size="3.3" text-anchor="end" fill="#1a1a1a" stroke="#1a1a1a" stroke-width="0.12">R212</text>
<text x="654.7" y="483.8" font-size="3.3" text-anchor="end" fill="#1a1a1a" stroke="#1a1a1a" stroke-width="0.12">0R</text>
<rect x="651.300" y="525.200" width="16.300" height="16.300" fill="none" stroke="#444" stroke-width="0.9"/>
<circle cx="659.500" cy="533.900" r="2" fill="#fff" stroke="#333" stroke-width="0.8"/>
<path d="M624.4 533.4L651.3 533.4" stroke="#7a7a7a" stroke-width="0.9" fill="none"/>
<circle cx="636.8" cy="533.4" r="1.35" fill="#222"/>
<path d="M624.4 529.4L624.4 537.4" stroke="#a8a8a8" stroke-width="0.8" fill="none"/>
<path d="M621.9 531.1L621.9 535.7" stroke="#a8a8a8" stroke-width="0.8" fill="none"/>
<path d="M619.4 532.6L619.4 534.2" stroke="#c8c8c8" stroke-width="0.8" fill="none"/>
<path d="M636.8 533.4L636.8 553.6L678.9 553.6L678.9 533.4L667.6 533.4" stroke="#555" stroke-width="0.9" fill="none" stroke-linejoin="miter"/>
<path d="M659.5 541.5L659.5 553.6" stroke="#505050" stroke-width="0.8" fill="none"/>
<circle cx="659.5" cy="553.6" r="1.35" fill="#222"/>
<text x="643.3" y="522.6" font-size="3.3" text-anchor="start" fill="#1a1a1a" stroke="#1a1a1a" stroke-width="0.12">J201</text>
<text x="657.4" y="523.2" font-size="2.6" text-anchor="start" fill="#666" transform="rotate(-90 657.4 523.2)">1</text>
<text x="647.9" y="532.4" font-size="3" text-anchor="middle" fill="#1a1a1a" stroke="#1a1a1a" stroke-width="0.12">4</text>
<text x="671" y="532.4" font-size="3" text-anchor="middle" fill="#1a1a1a" stroke="#1a1a1a" stroke-width="0.12">2</text>
<text x="649.5" y="543" font-size="3.0" text-anchor="start" fill="#1a1a1a" transform="rotate(-90 649.5 543)" stroke="#1a1a1a" stroke-width="0.12">GND</text>
<text x="672.8" y="542" font-size="3.0" text-anchor="start" fill="#1a1a1a" transform="rotate(-90 672.8 542)" stroke="#1a1a1a" stroke-width="0.12">GND</text>
<text x="663.9" y="550" font-size="3.0" text-anchor="start" fill="#1a1a1a" transform="rotate(-90 663.9 550)" stroke="#1a1a1a" stroke-width="0.12">GND</text>
<text x="657.6" y="546.4" font-size="2.6" text-anchor="middle" fill="#666">3</text>
<text x="656.3" y="529.6" font-size="2.4" text-anchor="middle" fill="#666">G</text>
<text x="664.4" y="533.2" font-size="2.4" text-anchor="middle" fill="#666">1</text>
<text x="663.7" y="536.8" font-size="2.4" text-anchor="middle" fill="#666">G</text>
<text x="796" y="340.1" font-size="3.4" text-anchor="middle" fill="#1a1a1a" stroke="#1a1a1a" stroke-width="0.12">ANT206</text>
<text x="796" y="343" font-size="2.6" text-anchor="middle" fill="#666">RC0</text>
<rect x="794.4" y="344" width="3.2" height="3.6" rx="0.5" fill="#000"/>
<path d="M796 348.5L796 403.4" stroke="#7a7a7a" stroke-width="0.9" fill="none"/>
<path d="M791.8 403.4L800.2 403.4" stroke="#a8a8a8" stroke-width="0.8" fill="none"/>
<path d="M793.6 405.9L798.4 405.9" stroke="#a8a8a8" stroke-width="0.8" fill="none"/>
<path d="M795.1 408.4L796.9 408.4" stroke="#c8c8c8" stroke-width="0.8" fill="none"/>
<text x="836.6" y="340.1" font-size="3.4" text-anchor="middle" fill="#1a1a1a" stroke="#1a1a1a" stroke-width="0.12">ANT205</text>
<text x="836.6" y="343" font-size="2.6" text-anchor="middle" fill="#666">RC0</text>
<rect x="835" y="344" width="3.2" height="3.6" rx="0.5" fill="#000"/>
<path d="M836.6 348.5L836.6 403.4" stroke="#7a7a7a" stroke-width="0.9" fill="none"/>
<path d="M832.4 403.4L840.8 403.4" stroke="#a8a8a8" stroke-width="0.8" fill="none"/>
<path d="M834.2 405.9L839 405.9" stroke="#a8a8a8" stroke-width="0.8" fill="none"/>
<path d="M835.7 408.4L837.5 408.4" stroke="#c8c8c8" stroke-width="0.8" fill="none"/>
<text x="873.4" y="340.1" font-size="3.4" text-anchor="middle" fill="#1a1a1a" stroke="#1a1a1a" stroke-width="0.12">ANT204</text>
<text x="873.4" y="343" font-size="2.6" text-anchor="middle" fill="#666">RC0</text>
<rect x="871.8" y="344" width="3.2" height="3.6" rx="0.5" fill="#000"/>
<path d="M873.4 348.5L873.4 405.5" stroke="#7a7a7a" stroke-width="0.9" fill="none"/>
<path d="M869.2 405.5L877.6 405.5" stroke="#a8a8a8" stroke-width="0.8" fill="none"/>
<path d="M871 408L875.8 408" stroke="#a8a8a8" stroke-width="0.8" fill="none"/>
<path d="M872.5 410.5L874.3 410.5" stroke="#c8c8c8" stroke-width="0.8" fill="none"/>
<path d="M740.7 773.6L1359.6 773.6" stroke="#555" stroke-width="0.9" fill="none"/>
<path d="M740.7 773.6L740.7 835" stroke="#555" stroke-width="0.9" fill="none"/>
<path d="M740.7 802L964.7 802" stroke="#555" stroke-width="0.9" fill="none"/>
<path d="M964.7 802L1152.5 802" stroke="#555" stroke-width="0.9" fill="none"/>
<path d="M1152.5 802L1359.6 802" stroke="#555" stroke-width="0.9" fill="none"/>
<path d="M740.7 818.2L1152.5 818.2" stroke="#555" stroke-width="0.9" fill="none"/>
<path d="M808.6 802L808.6 835" stroke="#555" stroke-width="0.9" fill="none"/>
<path d="M877.4 802L877.4 835" stroke="#555" stroke-width="0.9" fill="none"/>
<path d="M911.6 802L911.6 835" stroke="#888" stroke-width="0.9" fill="none"/>
<path d="M964.7 773.6L964.7 835" stroke="#555" stroke-width="0.9" fill="none"/>
<path d="M1152.5 773.6L1152.5 835" stroke="#555" stroke-width="0.9" fill="none"/>
<path d="M1038.5 818.2L1038.5 835" stroke="#555" stroke-width="0.9" fill="none"/>
<path d="M1241.6 802L1241.6 835" stroke="#555" stroke-width="0.9" fill="none"/>
<text x="745.6" y="791.9" font-size="10" text-anchor="start" fill="#111" textLength="144.4" lengthAdjust="spacingAndGlyphs">COMPANY: TRANSSION HOLDINGS</text>
<text x="745.6" y="814.1" font-size="10" text-anchor="start" fill="#111" textLength="30.8" lengthAdjust="spacingAndGlyphs">DRAWN</text>
<text x="827.5" y="814.1" font-size="10" text-anchor="start" fill="#111" textLength="30.3" lengthAdjust="spacingAndGlyphs">ZY/DLA</text>
<text x="880.2" y="815" font-size="10" text-anchor="start" fill="#111" textLength="29" lengthAdjust="spacingAndGlyphs">DATED</text>
<text x="915" y="813.8" font-size="10" text-anchor="start" fill="#111" textLength="42.6" lengthAdjust="spacingAndGlyphs">20180613</text>
<text x="745.6" y="830.4" font-size="10" text-anchor="start" fill="#111" textLength="40.4" lengthAdjust="spacingAndGlyphs">CHECKED</text>
<text x="816.7" y="830.4" font-size="10" text-anchor="start" fill="#111" textLength="52.1" lengthAdjust="spacingAndGlyphs">&lt;CHECKED&gt;</text>
<text x="880.2" y="830.6" font-size="10" text-anchor="start" fill="#111" textLength="29" lengthAdjust="spacingAndGlyphs">DATED</text>
<text x="929.3" y="830.4" font-size="10" text-anchor="start" fill="#111" textLength="17.4" lengthAdjust="spacingAndGlyphs">&lt;  &gt;</text>
<text x="969.4" y="790.5" font-size="10" text-anchor="start" fill="#111" textLength="32.8" lengthAdjust="spacingAndGlyphs">MODEL:</text>
<text x="1038.5" y="791" font-size="10" text-anchor="start" fill="#111" textLength="27.9" lengthAdjust="spacingAndGlyphs">H6114</text>
<text x="969.4" y="815" font-size="10" text-anchor="start" fill="#111" textLength="27.6" lengthAdjust="spacingAndGlyphs">TITLE:</text>
<text x="1013.8" y="815" font-size="10" text-anchor="start" fill="#111" textLength="42.1" lengthAdjust="spacingAndGlyphs">2_SUB_RF</text>
<text x="969" y="830.8" font-size="10" text-anchor="start" fill="#111" textLength="62.4" lengthAdjust="spacingAndGlyphs">Confidentiality</text>
<text x="1059.2" y="830.8" font-size="10" text-anchor="start" fill="#111" textLength="62.4" lengthAdjust="spacingAndGlyphs">CONFIDENTIAL</text>
<text x="1157" y="791.5" font-size="10" text-anchor="start" fill="#111" textLength="62.8" lengthAdjust="spacingAndGlyphs">Modified Date:</text>
<text x="1237.5" y="791" font-size="10" text-anchor="start" fill="#111" textLength="45.5" lengthAdjust="spacingAndGlyphs">2020/5/20</text>
<text x="1157" y="822.2" font-size="10" text-anchor="start" fill="#111" textLength="41.4" lengthAdjust="spacingAndGlyphs">VERSION:</text>
<text x="1205.8" y="822.2" font-size="10" text-anchor="start" fill="#111" textLength="19.2" lengthAdjust="spacingAndGlyphs">V1.0</text>
<text x="1244" y="823" font-size="10" text-anchor="start" fill="#111" textLength="29" lengthAdjust="spacingAndGlyphs">SHEET:</text>
<text x="1282" y="822" font-size="10" text-anchor="start" fill="#111" textLength="5" lengthAdjust="spacingAndGlyphs">2</text>
<text x="1295.8" y="823" font-size="10" text-anchor="start" fill="#111" textLength="10.5" lengthAdjust="spacingAndGlyphs">OF</text>
<text x="1324.8" y="822" font-size="10" text-anchor="start" fill="#111" textLength="5" lengthAdjust="spacingAndGlyphs">2</text>
</svg>
<!-- right scrollbar -->
</div>
<div class="abs" style="left:1506px;top:161px;width:14px;height:673px;background:#fff"></div>
<div class="sbtn" style="left:1506px;top:161px;width:14px;height:17px;border-color:#e0e0e0"><svg class="abs" style="left:2px;top:4px" width="9" height="7" viewBox="0 0 9 7"><path d="M.8 5.500L4.500 1.600 8.200 5.500" fill="none" stroke="#555" stroke-width="1.300"/></svg></div>
<div class="sbtn" style="left:1506px;top:819px;width:14px;height:15px;border-color:#e0e0e0"><svg class="abs" style="left:2px;top:3px" width="9" height="7" viewBox="0 0 9 7"><path d="M.8 1.500L4.500 5.400 8.200 1.500" fill="none" stroke="#555" stroke-width="1.300"/></svg></div>
<div class="thumb" style="left:1506px;top:499px;width:14px;height:320px;border-color:#d0d0d0;background:#dedede"><div class="abs" style="left:3px;top:155px;width:7px;height:2px;background:#5a5a5a;box-shadow:0 3px 0 #5a5a5a,0 6px 0 #5a5a5a"></div></div>
<div id="status">
  <div class="mono" style="left:-1px">Version:1.0.0.52</div>
  <div class="mono" style="left:1316px">Current [B6031_H6123_Sub_SCH_V1.0]</div>
</div>
</div>
</body>
</html>
